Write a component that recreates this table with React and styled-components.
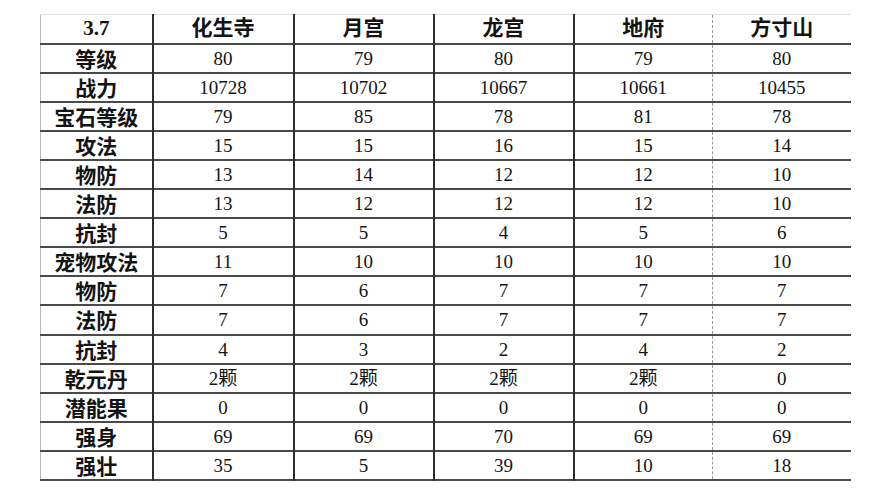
import React from "react";
import styled, { createGlobalStyle } from "styled-components";

const GlobalStyle = createGlobalStyle`
  html, body {
    margin: 0;
    padding: 0;
    background: #ffffff;
  }
`;

const Page = styled.main`
  width: 889px;
  height: 500px;
  padding: 14px 0 0 40px;
  box-sizing: border-box;
  background: #fff;
`;

const Table = styled.table`
  border-collapse: collapse;
  table-layout: fixed;
  width: 810px;
  color: #141414;
  border-top: 1px solid #e2e2e2;
  border-left: 1px solid #b8b8b8;
`;

const Row = styled.tr`
  height: 29.1px;
  border-bottom: 2px solid #4a4a4a;
`;

const Cell = styled.td`
  padding: 0;
  text-align: center;
  vertical-align: middle;
  font-family: "Liberation Serif", "Noto Sans CJK SC", serif;
  font-size: 19px;
  line-height: 1;
  border-right: ${({ $dashed, $last }) =>
    $last ? "none" : $dashed ? "1px dashed #9a9a9a" : "2px solid #2e2e2e"};
`;

const HeadCell = styled(Cell)`
  font-weight: 700;
  font-size: 21px;
`;

const LabelCell = styled(Cell)`
  font-family: "Noto Sans CJK SC", sans-serif;
  font-weight: 700;
  font-size: 21px;
`;

const widths = [112, 141, 140, 140, 139, 138];
const heads = ["3.7", "化生寺", "月宫", "龙宫", "地府", "方寸山"];

const rows = [
  ["等级", "80", "79", "80", "79", "80"],
  ["战力", "10728", "10702", "10667", "10661", "10455"],
  ["宝石等级", "79", "85", "78", "81", "78"],
  ["攻法", "15", "15", "16", "15", "14"],
  ["物防", "13", "14", "12", "12", "10"],
  ["法防", "13", "12", "12", "12", "10"],
  ["抗封", "5", "5", "4", "5", "6"],
  ["宠物攻法", "11", "10", "10", "10", "10"],
  ["物防", "7", "6", "7", "7", "7"],
  ["法防", "7", "6", "7", "7", "7"],
  ["抗封", "4", "3", "2", "4", "2"],
  ["乾元丹", "2颗", "2颗", "2颗", "2颗", "0"],
  ["潜能果", "0", "0", "0", "0", "0"],
  ["强身", "69", "69", "70", "69", "69"],
  ["强壮", "35", "5", "39", "10", "18"],
];

function App() {
  return (
    <Page>
      <GlobalStyle />
      <Table>
        <colgroup>
          {widths.map((w, i) => (
            <col key={i} style={{ width: w }} />
          ))}
        </colgroup>
        <thead>
          <Row>
            {heads.map((h, i) => (
              <HeadCell key={h} $dashed={i === 4} $last={i === 5}>
                {h}
              </HeadCell>
            ))}
          </Row>
        </thead>
        <tbody>
          {rows.map((r, ri) => (
            <Row key={ri}>
              {r.map((v, i) =>
                i === 0 ? (
                  <LabelCell key={i}>{v}</LabelCell>
                ) : (
                  <Cell key={i} $dashed={i === 4} $last={i === 5}>
                    {v}
                  </Cell>
                )
              )}
            </Row>
          ))}
        </tbody>
      </Table>
    </Page>
  );
}

export default App;
